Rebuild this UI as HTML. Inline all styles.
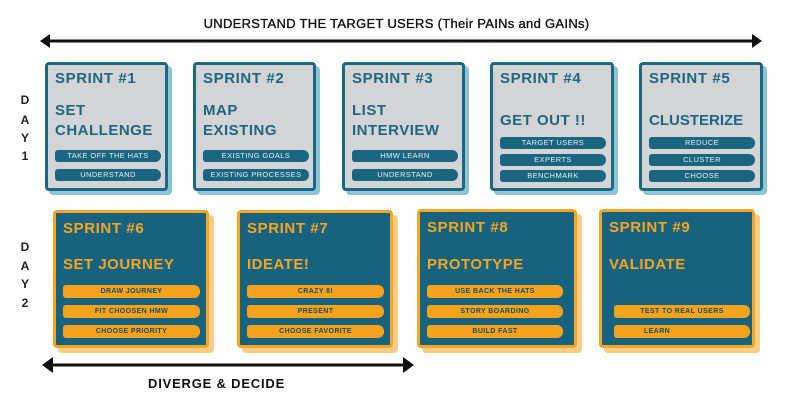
<!DOCTYPE html>
<html><head><meta charset="utf-8"><style>
body{margin:0;width:793px;height:404px;background:#fff;position:relative;overflow:hidden;font-family:"Liberation Sans",sans-serif;font-weight:bold}
.a{position:absolute}
.t{position:absolute;white-space:nowrap}
.card{position:absolute;box-sizing:border-box;border-radius:4px}
.top{background:#d3d4d6;border:3px solid #1f6680;color:#1f6680}
.topsh{background:#8cc5d6;border-radius:4px;position:absolute}
.bot{background:#17627e;border:3px solid #f5a623;color:#f5a623}
.botsh{background:#f9cd86;border-radius:4px;position:absolute}
.h{position:absolute;left:7px;font-size:15px;letter-spacing:0.6px}
.ti{position:absolute;left:7px;font-size:15px;letter-spacing:0.5px;line-height:20px}
.p{position:absolute;height:12px;border-radius:3px 6px 6px 3px;font-size:7.5px;font-weight:normal;letter-spacing:.4px;text-align:center;line-height:12px}
.tp{background:#1a6681;color:#e6eef2}
.bp{background:#f5a21c;color:#1a4c63;height:13px;line-height:13px;font-weight:bold;font-size:7px}
.day{position:absolute;left:19px;width:12px;text-align:center;font-size:12px;color:#222}
</style></head><body>
<div class="t" style="left:0;width:793px;text-align:center;top:16px;font-size:13px;font-weight:normal;-webkit-text-stroke:0.35px #111;color:#111;letter-spacing:.3px">UNDERSTAND THE TARGET USERS (Their PAINs and GAINs)</div>
<svg class="a" style="left:0;top:0" width="793" height="404">
<line x1="48" y1="41" x2="754" y2="41" stroke="#111" stroke-width="3"/>
<polygon points="40,41 50,34 50,48" fill="#111"/><polygon points="762,41 752,34 752,48" fill="#111"/>
<line x1="50" y1="365" x2="406" y2="365" stroke="#111" stroke-width="3"/>
<polygon points="42,365 53,357 53,373" fill="#111"/><polygon points="414,365 403,357 403,373" fill="#111"/>
</svg>
<div class="t" style="left:148px;top:376px;font-size:13px;letter-spacing:.8px;color:#111">DIVERGE &amp; DECIDE</div>
<div class="day" style="top:93px">D</div><div class="day" style="top:113px">A</div><div class="day" style="top:131px">Y</div><div class="day" style="top:149px">1</div>
<div class="day" style="top:240px">D</div><div class="day" style="top:259px">A</div><div class="day" style="top:277px">Y</div><div class="day" style="top:296px">2</div>

<div class="topsh" style="left:49px;top:66px;width:123px;height:129px"></div>
<div class="card top" style="left:45px;top:62px;width:123px;height:129px">
<div class="h" style="top:5px">SPRINT #1</div>
<div class="ti" style="top:36px">SET<br>CHALLENGE</div>
<div class="p tp" style="left:7px;top:85px;width:106px">TAKE OFF THE HATS</div>
<div class="p tp" style="left:7px;top:104px;width:106px">UNDERSTAND</div></div>

<div class="topsh" style="left:197px;top:66px;width:123px;height:129px"></div>
<div class="card top" style="left:193px;top:62px;width:123px;height:129px">
<div class="h" style="top:5px">SPRINT #2</div>
<div class="ti" style="top:36px">MAP<br>EXISTING</div>
<div class="p tp" style="left:7px;top:85px;width:106px">EXISTING GOALS</div>
<div class="p tp" style="left:7px;top:104px;width:106px">EXISTING PROCESSES</div></div>

<div class="topsh" style="left:346px;top:66px;width:123px;height:129px"></div>
<div class="card top" style="left:342px;top:62px;width:123px;height:129px">
<div class="h" style="top:5px">SPRINT #3</div>
<div class="ti" style="top:36px">LIST<br>INTERVIEW</div>
<div class="p tp" style="left:7px;top:85px;width:106px">HMW LEARN</div>
<div class="p tp" style="left:7px;top:104px;width:106px">UNDERSTAND</div></div>

<div class="topsh" style="left:494px;top:66px;width:124px;height:129px"></div>
<div class="card top" style="left:490px;top:62px;width:124px;height:129px">
<div class="h" style="top:5px">SPRINT #4</div>
<div class="ti" style="top:46px">GET OUT !!</div>
<div class="p tp" style="left:7px;top:72px;width:106px">TARGET USERS</div>
<div class="p tp" style="left:7px;top:89px;width:106px">EXPERTS</div>
<div class="p tp" style="left:7px;top:105px;width:106px">BENCHMARK</div></div>

<div class="topsh" style="left:643px;top:66px;width:124px;height:129px"></div>
<div class="card top" style="left:639px;top:62px;width:124px;height:129px">
<div class="h" style="top:5px">SPRINT #5</div>
<div class="ti" style="top:46px;letter-spacing:0">CLUSTERIZE</div>
<div class="p tp" style="left:7px;top:72px;width:106px">REDUCE</div>
<div class="p tp" style="left:7px;top:89px;width:106px">CLUSTER</div>
<div class="p tp" style="left:7px;top:105px;width:106px">CHOOSE</div></div>

<div class="botsh" style="left:58px;top:215px;width:156px;height:138px"></div>
<div class="card bot" style="left:53px;top:210px;width:156px;height:138px">
<div class="h" style="top:7px">SPRINT #6</div>
<div class="ti" style="top:42px">SET JOURNEY</div>
<div class="p bp" style="left:7px;top:72px;width:137px">DRAW JOURNEY</div>
<div class="p bp" style="left:7px;top:92px;width:137px">FIT CHOOSEN HMW</div>
<div class="p bp" style="left:7px;top:112px;width:137px">CHOOSE PRIORITY</div></div>

<div class="botsh" style="left:242px;top:215px;width:156px;height:138px"></div>
<div class="card bot" style="left:237px;top:210px;width:156px;height:138px">
<div class="h" style="top:7px">SPRINT #7</div>
<div class="ti" style="top:42px">IDEATE!</div>
<div class="p bp" style="left:7px;top:72px;width:137px">CRAZY 8!</div>
<div class="p bp" style="left:7px;top:92px;width:137px">PRESENT</div>
<div class="p bp" style="left:7px;top:112px;width:137px">CHOOSE FAVORITE</div></div>

<div class="botsh" style="left:422px;top:214px;width:160px;height:139px"></div>
<div class="card bot" style="left:417px;top:209px;width:160px;height:139px">
<div class="h" style="top:7px">SPRINT #8</div>
<div class="ti" style="top:43px">PROTOTYPE</div>
<div class="p bp" style="left:7px;top:73px;width:136px">USE BACK THE HATS</div>
<div class="p bp" style="left:7px;top:93px;width:136px">STORY BOARDING</div>
<div class="p bp" style="left:7px;top:113px;width:136px">BUILD FAST</div></div>

<div class="botsh" style="left:604px;top:214px;width:156px;height:139px"></div>
<div class="card bot" style="left:599px;top:209px;width:156px;height:139px">
<div class="h" style="top:7px">SPRINT #9</div>
<div class="ti" style="top:43px">VALIDATE</div>
<div class="p bp" style="left:12px;top:93px;width:136px">TEST TO REAL USERS</div>
<div class="p bp" style="left:12px;top:113px;width:136px;text-align:left;text-indent:30px">LEARN</div></div>
</body></html>
